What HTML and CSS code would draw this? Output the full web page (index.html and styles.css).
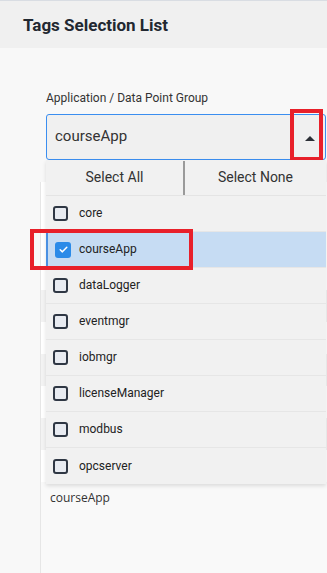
FILE: index.html
```html
<!DOCTYPE html>
<html lang="en">
<head>
<meta charset="utf-8">
<title>Tags Selection List</title>
<link rel="stylesheet" href="styles.css">
</head>
<body>
<div class="page">
  <header class="header">
    <h1 class="title">Tags Selection List</h1>
  </header>
  <main class="main">
    <div class="field-label">Application / Data Point Group</div>
    <div class="select">
      <div class="select-box">
        <span class="select-value">courseApp</span>
        <span class="caret"></span>
      </div>
      <div class="annot annot-caret"></div>
      <div class="dropdown">
        <div class="dd-actions">
          <span class="dd-btn">Select All</span>
          <span class="dd-sep"></span>
          <span class="dd-btn">Select None</span>
        </div>
        <ul class="dd-list">
          <li class="dd-item"><span class="cb"></span><span class="dd-text">core</span></li>
          <li class="dd-item selected"><span class="cb checked"><svg viewBox="0 0 16 16" width="11" height="11"><path d="M3.2 8.4 L6.4 11.4 L12.8 4.8" fill="none" stroke="#fff" stroke-width="2.2" stroke-linecap="round" stroke-linejoin="round"/></svg></span><span class="dd-text">courseApp</span><span class="annot annot-row"></span></li>
          <li class="dd-item"><span class="cb"></span><span class="dd-text">dataLogger</span></li>
          <li class="dd-item"><span class="cb"></span><span class="dd-text">eventmgr</span></li>
          <li class="dd-item"><span class="cb"></span><span class="dd-text">iobmgr</span></li>
          <li class="dd-item"><span class="cb"></span><span class="dd-text">licenseManager</span></li>
          <li class="dd-item"><span class="cb"></span><span class="dd-text">modbus</span></li>
          <li class="dd-item"><span class="cb"></span><span class="dd-text">opcserver</span></li>
        </ul>
      </div>
    </div>
    <section class="card">
      <div class="stripes">
        <div class="stripe white tall"></div>
        <div class="stripe gray"></div>
        <div class="stripe white"></div>
        <div class="stripe gray"></div>
        <div class="stripe white"></div>
        <div class="stripe gray"></div>
        <div class="stripe white"></div>
      </div>
      <div class="card-value">courseApp</div>
    </section>
  </main>
</div>
</body>
</html>
```

FILE: styles.css
```css
html, body {
  margin: 0;
  padding: 0;
}
body {
  font-family: Roboto, "Liberation Sans", sans-serif;
  background: #f5f5f5;
  color: #222;
}
.page {
  width: 327px;
  height: 573px;
  overflow: hidden;
  display: flex;
  flex-direction: column;
}
.header {
  height: 47px;
  flex: none;
  background: #f0f0f0;
  border-top: 1px solid #d9dde3;
  display: flex;
  align-items: center;
  padding-left: 23px;
}
.title {
  margin: 0;
  font-size: 17px;
  font-weight: 700;
  color: #222831;
  line-height: 20px;
  padding-top: 1px;
}
.main {
  flex: 1;
  background: #f8f8f8;
  padding: 43px 0 0 46px;
  display: flex;
  flex-direction: column;
}
.field-label {
  font-size: 12px;
  color: #333;
  line-height: 14px;
  margin-bottom: 9px;
}
.select {
  position: relative;
  width: 280px;
  z-index: 2;
}
.select-box {
  box-sizing: border-box;
  height: 46px;
  border: 1px solid #3b8ef0;
  border-radius: 3px;
  background: #f0f0f0;
  display: flex;
  align-items: center;
  justify-content: space-between;
  padding: 0 10px 0 8px;
}
.select-value {
  font-size: 15px;
  color: #333;
  margin-top: -2px;
}
.caret {
  width: 0;
  height: 0;
  border-left: 5px solid transparent;
  border-right: 5px solid transparent;
  border-bottom: 5px solid #2b2f36;
  margin-top: 3px;
}
.annot {
  position: absolute;
  box-sizing: border-box;
  border: 4px solid #e8202a;
  pointer-events: none;
}
.annot-caret {
  left: 244px;
  top: -5px;
  width: 33px;
  height: 52px;
}
.dropdown {
  position: absolute;
  top: 46px;
  left: 0;
  width: 280px;
  background: #f1f1f1;
  box-shadow: 0 2px 4px rgba(0, 0, 0, 0.12);
}
.dd-actions {
  height: 35px;
  display: flex;
  align-items: stretch;
  border-bottom: 1px solid #e4e4e4;
}
.dd-btn {
  flex: 1;
  display: flex;
  align-items: center;
  justify-content: center;
  font-size: 14px;
  color: #333;
  padding-bottom: 2px;
}
.dd-btn:first-child {
  flex: 0 0 137px;
}
.dd-sep {
  width: 2px;
  background: #9a9a9a;
  margin-top: 1px;
}
.dd-list {
  list-style: none;
  margin: 0;
  padding: 0;
}
.dd-item {
  position: relative;
  box-sizing: border-box;
  height: 36px;
  display: flex;
  align-items: center;
  padding-left: 7px;
  border-bottom: 1px solid #e6e6e6;
}
.dd-item:last-child {
  border-bottom: none;
}
.dd-item.selected {
  background: #c6dcf3;
  border-left: 2px solid #4a90e2;
  padding-left: 7px;
}
.cb {
  box-sizing: border-box;
  width: 15px;
  height: 15px;
  border: 2px solid #2f3744;
  border-radius: 3px;
  background: #e8ebf1;
  margin-right: 11px;
  display: flex;
  align-items: center;
  justify-content: center;
}
.cb.checked {
  width: 16px;
  height: 16px;
  border: none;
  background: #2b8be8;
  margin-right: 8px;
}
.dd-text {
  font-size: 12px;
  color: #222;
  margin-top: -1px;
}
.annot-row {
  left: -18px;
  top: -3px;
  width: 163px;
  height: 41px;
}
.card {
  margin: 22px 0 0 -6px;
  flex: 1;
  border-left: 1px solid #e6e6e6;
  background: #f9f9f9;
  display: flex;
  flex-direction: column;
}
.stripes {
  display: flex;
  flex-direction: column;
}
.stripe {
  height: 32px;
}
.stripe.tall {
  height: 108px;
}
.stripe.white {
  background: #ffffff;
}
.stripe.gray {
  background: #f3f3f3;
}
.card-value {
  font-family: "Open Sans", "Liberation Sans", sans-serif;
  font-size: 12px;
  color: #333;
  padding: 7px 0 0 9px;
}
```
